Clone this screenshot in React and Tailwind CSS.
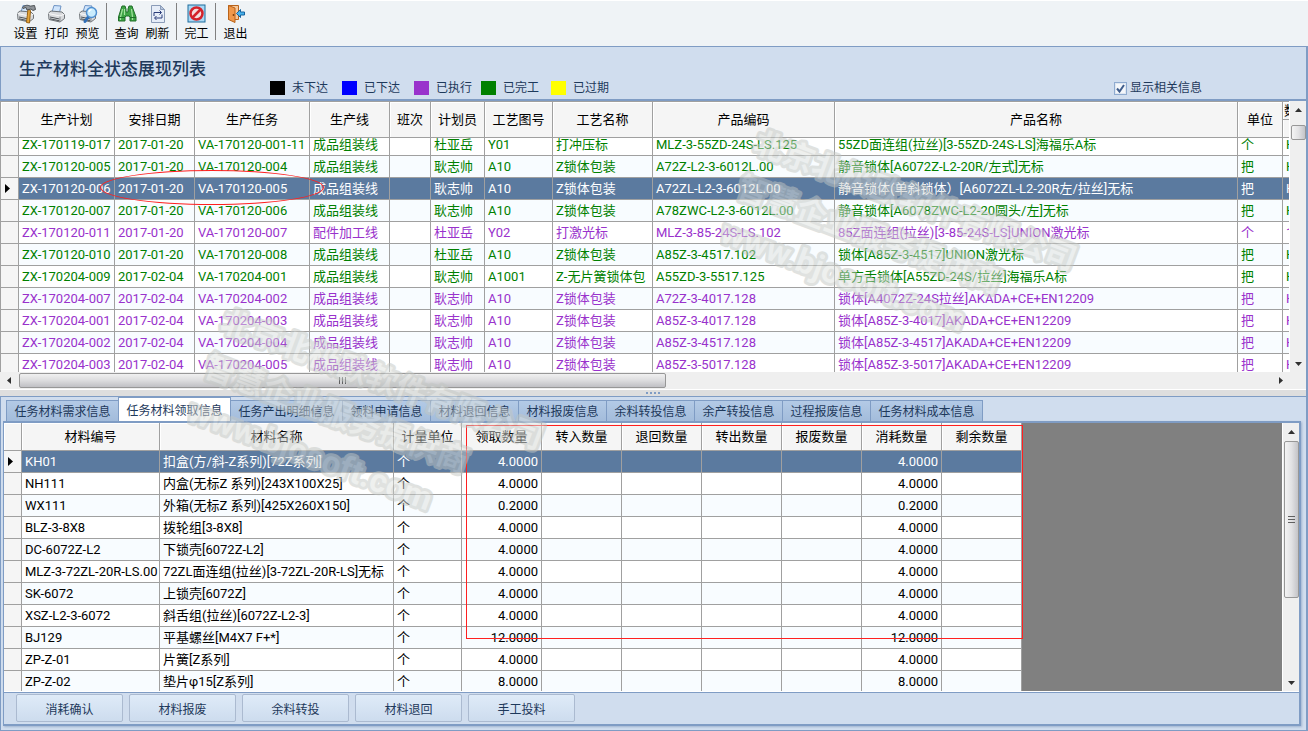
import React from "react";
import clsx from "clsx";

const legend = [
  { label: "未下达", color: "bg-black", width: "w-[72px]" },
  { label: "已下达", color: "bg-[#0000ff]", width: "w-[72px]" },
  { label: "已执行", color: "bg-[#9932cc]", width: "w-[67px]" },
  { label: "已完工", color: "bg-[#008000]", width: "w-[70px]" },
  { label: "已过期", color: "bg-[#ffff00]", width: "w-[70px]" },
];

const planColumns = [
  { title: "生产计划", width: "w-[96px]" },
  { title: "安排日期", width: "w-[80px]" },
  { title: "生产任务", width: "w-[115px]" },
  { title: "生产线", width: "w-[80px]" },
  { title: "班次", width: "w-[41px]" },
  { title: "计划员", width: "w-[54px]" },
  { title: "工艺图号", width: "w-[68px]" },
  { title: "工艺名称", width: "w-[100px]" },
  { title: "产品编码", width: "w-[182px]" },
  { title: "产品名称", width: "w-[403px]" },
  { title: "单位", width: "w-[45px]" },
];

const planRows = [
  ["done", "ZX-170119-017", "2017-01-20", "VA-170120-001-11", "成品组装线", "", "杜亚岳", "Y01", "打冲压标", "MLZ-3-55ZD-24S-LS.125", "55ZD面连组(拉丝)[3-55ZD-24S-LS]海福乐A标", "个", "H"],
  ["done", "ZX-170120-005", "2017-01-20", "VA-170120-004", "成品组装线", "", "耿志帅", "A10", "Z锁体包装", "A72Z-L2-3-6012L.00", "静音锁体[A6072Z-L2-20R/左式]无标", "把", "H"],
  ["done", "ZX-170120-006", "2017-01-20", "VA-170120-005", "成品组装线", "", "耿志帅", "A10", "Z锁体包装", "A72ZL-L2-3-6012L.00", "静音锁体(单斜锁体）[A6072ZL-L2-20R左/拉丝]无标", "把", "H"],
  ["done", "ZX-170120-007", "2017-01-20", "VA-170120-006", "成品组装线", "", "耿志帅", "A10", "Z锁体包装", "A78ZWC-L2-3-6012L.00", "静音锁体[A6078ZWC-L2-20圆头/左]无标", "把", "H"],
  ["running", "ZX-170120-011", "2017-01-20", "VA-170120-007", "配件加工线", "", "杜亚岳", "Y02", "打激光标", "MLZ-3-85-24S-LS.102", "85Z面连组(拉丝)[3-85-24S-LS]UNION激光标", "个", "1"],
  ["done", "ZX-170120-010", "2017-01-20", "VA-170120-008", "成品组装线", "", "杜亚岳", "A10", "Z锁体包装", "A85Z-3-4517.102", "锁体[A85Z-3-4517]UNION激光标", "把", "H"],
  ["done", "ZX-170204-009", "2017-02-04", "VA-170204-001", "成品组装线", "", "耿志帅", "A1001", "Z-无片簧锁体包", "A55ZD-3-5517.125", "单方舌锁体[A55ZD-24S/拉丝]海福乐A标", "把", "H"],
  ["running", "ZX-170204-007", "2017-02-04", "VA-170204-002", "成品组装线", "", "耿志帅", "A10", "Z锁体包装", "A72Z-3-4017.128", "锁体[A4072Z-24S拉丝]AKADA+CE+EN12209", "把", "H"],
  ["running", "ZX-170204-001", "2017-02-04", "VA-170204-003", "成品组装线", "", "耿志帅", "A10", "Z锁体包装", "A85Z-3-4017.128", "锁体[A85Z-3-4017]AKADA+CE+EN12209", "把", "H"],
  ["running", "ZX-170204-002", "2017-02-04", "VA-170204-004", "成品组装线", "", "耿志帅", "A10", "Z锁体包装", "A85Z-3-4517.128", "锁体[A85Z-3-4517]AKADA+CE+EN12209", "把", "H"],
  ["running", "ZX-170204-003", "2017-02-04", "VA-170204-005", "成品组装线", "", "耿志帅", "A10", "Z锁体包装", "A85Z-3-5017.128", "锁体[A85Z-3-5017]AKADA+CE+EN12209", "把", "H"],
];

const tabs = [
  "任务材料需求信息",
  "任务材料领取信息",
  "任务产出明细信息",
  "领料申请信息",
  "材料退回信息",
  "材料报废信息",
  "余料转投信息",
  "余产转投信息",
  "过程报废信息",
  "任务材料成本信息",
];

const quantityColumns = ["领取数量", "转入数量", "退回数量", "转出数量", "报废数量", "消耗数量", "剩余数量"];

const materialRows = [
  ["KH01", "扣盒(方/斜-Z系列)[72Z系列]", "4.0000"],
  ["NH111", "内盒(无标Z 系列)[243X100X25]", "4.0000"],
  ["WX111", "外箱(无标Z 系列)[425X260X150]", "0.2000"],
  ["BLZ-3-8X8", "拨轮组[3-8X8]", "4.0000"],
  ["DC-6072Z-L2", "下锁壳[6072Z-L2]", "4.0000"],
  ["MLZ-3-72ZL-20R-LS.00", "72ZL面连组(拉丝)[3-72ZL-20R-LS]无标", "4.0000"],
  ["SK-6072", "上锁壳[6072Z]", "4.0000"],
  ["XSZ-L2-3-6072", "斜舌组(拉丝)[6072Z-L2-3]", "4.0000"],
  ["BJ129", "平基螺丝[M4X7 F+*]", "12.0000"],
  ["ZP-Z-01", "片簧[Z系列]", "4.0000"],
  ["ZP-Z-02", "垫片φ15[Z系列]", "8.0000"],
];

const actions = ["消耗确认", "材料报废", "余料转投", "材料退回", "手工投料"];

const PrinterShape = () => (
  <>
    <path d="M5 8 7 1.5 14 2 12.5 8.5z" fill="#cfe4fb" stroke="#6d93c4" />
    <path d="M1.5 9 4 7l11 1 2.5 2.5v4L13 18l-11-2.5z" fill="#d9dbde" stroke="#6f7478" />
    <path d="M1.5 9.5 13 12l4.5-2" fill="none" stroke="#f8f8f8" />
    <path d="M3 13l9.5 2M3 14.8l9.5 2" stroke="#4f5458" />
    <path d="M13 12.5V18" stroke="#8c9094" />
  </>
);

const icons = {
  settings: (
    <>
      <PrinterShape />
      <path d="M12 5l2.5 1.5-1 12.5-3-.5z" fill="#e5a53a" stroke="#9a6316" />
      <path d="M6.5 3.5C9 .8 12 .8 14 2.2l4.5-.7 1 4-2.5 1-2-1.5-4 1-1-2.5-3 1z" fill="#8f9499" stroke="#4c5155" />
    </>
  ),
  print: <PrinterShape />,
  preview: (
    <>
      <PrinterShape />
      <path d="M10.5 12.5 7 17.5" stroke="#2f6fb8" strokeWidth="3" strokeLinecap="round" />
      <circle cx="13.5" cy="8.5" r="5" fill="#c9ecfd" stroke="#4f8fd0" strokeWidth="1.5" />
      <path d="M11 8c.3-1.500 1.300-2.300 2.600-2.300" fill="none" stroke="#fff" strokeWidth="1.200" />
    </>
  ),
  search: (
    <>
      <path d="M5 2h3l1 3v3h2V5l1-3h3l1 3 3 8v4h-6v-4l-1-1h-3l-1 1v4H1.500v-4L4 5z" fill="#3ea445" stroke="#1f6e29" />
      <path d="M5.500 5 3.500 13v3M14.500 5l1 8v3M7.500 5v6" fill="none" stroke="#a5e3a0" strokeWidth="1.200" />
      <path d="M2 13.500h6M13 13.500h6" stroke="#1f6e29" />
    </>
  ),
  refresh: (
    <>
      <path d="M3.500 1.500h9l4 4v13h-13z" fill="#e6edf8" stroke="#8b9cb8" />
      <path d="M12.500 1.500v4h4z" fill="#b8c7de" stroke="#8b9cb8" />
      <path d="M6 12V8.500h7M11.500 6.500l2 2-2 2M14 10.500V14H7M8.500 12l-2 2 2 2" fill="none" stroke="#2b3d7a" />
    </>
  ),
  finish: (
    <>
      <rect x="1" y="1" width="17" height="17" fill="#a9d8f5" stroke="#1d6c9c" />
      <circle cx="9.500" cy="9.500" r="6" fill="#f3dede" stroke="#d4232b" strokeWidth="2.500" />
      <path d="M5.500 13.500 13.500 5.500" stroke="#d4232b" strokeWidth="2.500" />
    </>
  ),
  exit: (
    <>
      <path d="M2.500 1.500h10v14h-10z" fill="#f6c79a" stroke="#b9631a" />
      <path d="M2.500 1.500 9 4v14.500l-6.500-3z" fill="#f0984a" stroke="#b9631a" />
      <circle cx="7.500" cy="11" r="0.900" fill="#7a3c0b" />
      <path d="M10.500 9.500 14.500 5.500V8h4v3h-4v2.500z" fill="#49b3ec" stroke="#16629e" />
    </>
  ),
};

const toolGroups = [
  [
    ["设置", "settings"],
    ["打印", "print"],
    ["预览", "preview"],
  ],
  [
    ["查询", "search"],
    ["刷新", "refresh"],
  ],
  [["完工", "finish"]],
  [["退出", "exit"]],
];

const Toolbar = () => (
  <div className="flex h-[46px] bg-[#eff3f6] border-t border-white pl-2.5 pt-0.5">
    {toolGroups.map((group, i) => (
      <div key={i} className="flex">
        {i > 0 && <div className="w-px h-[37px] bg-[#808080] ml-[3px] mr-1" />}
        {group.map(([label, icon]) => (
          <button key={label} className="w-[31px] flex flex-col items-center pt-px text-black">
            <svg width="20" height="20" viewBox="0 0 20 20">
              {icons[icon]}
            </svg>
            <span className="leading-4 mt-0.5">{label}</span>
          </button>
        ))}
      </div>
    ))}
  </div>
);

const arrowPaths = {
  up: "M1 6 4.500 2 8 6z",
  down: "M1 3h7L4.500 7z",
  left: "M6 1v7L2 4.500z",
  right: "M3 1v7l4-3.500z",
};

const Arrow = ({ dir }) => (
  <svg width="9" height="9" viewBox="0 0 9 9" className="shrink-0">
    <path d={arrowPaths[dir]} fill="#303030" />
  </svg>
);

const RowPointer = () => (
  <svg width="6" height="9" viewBox="0 0 6 9" className="ml-1">
    <path d="M0 0v9l5-4.500z" fill="#000" />
  </svg>
);

const VerticalScrollbar = ({ thumb, grip }) => (
  <div className="w-[17px] shrink-0 bg-[#efefef] border-l border-white flex flex-col items-center">
    <div className="h-[18px] flex items-center">
      <Arrow dir="up" />
    </div>
    <div
      className={clsx(
        "w-[15px] rounded-xs border border-[#979797] bg-linear-to-r from-[#f4f4f4] via-[#e2e2e4] to-[#c4c4c8] flex flex-col items-center justify-center gap-px",
        thumb
      )}
    >
      {grip && [0, 1, 2].map((n) => <div key={n} className="w-[7px] h-px bg-[#606060] mb-px" />)}
    </div>
    <div className="mt-auto h-[18px] flex items-center">
      <Arrow dir="down" />
    </div>
  </div>
);

const HeadCell = ({ className, children }) => (
  <th
    scope="col"
    className={clsx(
      "p-0 bg-[#f5f5f5] border-r border-b border-[#a0a0a0] shadow-[inset_1px_1px_0_#fff] font-normal text-center",
      className
    )}
  >
    {children}
  </th>
);

const RowHead = ({ selected }) => (
  <td className="p-0 bg-[#f5f5f5] border-r border-b border-[#a0a0a0]">{selected && <RowPointer />}</td>
);

const PlanTable = () => (
  <div className="relative flex bg-white">
    <div className="flex-1 min-w-0 h-[271px] overflow-hidden">
      <table className="table-fixed w-[1400px] border-separate border-spacing-0 text-[13px] text-black border-l border-t border-[#a0a0a0]">
        <thead>
          <tr className="h-[36px]">
            <HeadCell className="w-[18px]" />
            {planColumns.map((c) => (
              <HeadCell key={c.title} className={c.width}>
                {c.title}
              </HeadCell>
            ))}
            <HeadCell>
              <div className="h-[18px] leading-[17px] border-b border-[#a0a0a0] text-left pl-px">数量</div>
              <div className="h-[17px]" />
            </HeadCell>
          </tr>
        </thead>
        <tbody>
          {planRows.map(([state, ...cells], r) => {
            const selected = r === 2;
            return (
              <tr
                key={cells[0]}
                className={clsx(
                  selected ? "bg-[#5b7a9f] text-white" : state === "done" ? "text-[#008000]" : "text-[#9932cc]",
                  !selected && (r % 2 ? "bg-[#f8fcff]" : "bg-white")
                )}
              >
                <RowHead selected={selected} />
                {cells.map((text, c) => (
                  <td key={c} className="p-0 border-r border-b border-[#a0a0a0]">
                    <div
                      className={clsx(
                        "flex pl-[3px] overflow-hidden whitespace-nowrap leading-[21px]",
                        r === 0 ? "h-[17px] items-end" : "h-[21px]"
                      )}
                    >
                      {text}
                    </div>
                  </td>
                ))}
              </tr>
            );
          })}
        </tbody>
      </table>
    </div>
    <VerticalScrollbar thumb="h-[15px] mt-1.5" />
    <div className="absolute left-[100px] top-[69px] w-[224px] h-[35px] rounded-[50%] border border-[#ff2020] pointer-events-none" />
  </div>
);

const HorizontalScrollbar = () => (
  <div className="flex h-[18px] items-center bg-[#efefef] border-b border-white">
    <div className="w-[19px] flex justify-center">
      <Arrow dir="left" />
    </div>
    <div className="w-1/2 max-w-[647px] h-[15px] rounded-xs border border-[#979797] bg-linear-to-b from-[#f0f0f0] via-[#dcdcde] to-[#c0c0c4] flex items-center justify-center gap-px">
      {[0, 1, 2].map((n) => (
        <div key={n} className="w-px h-[7px] bg-[#606060] mr-px" />
      ))}
    </div>
    <div className="ml-auto mr-[21px]">
      <Arrow dir="right" />
    </div>
  </div>
);

const MaterialTable = () => (
  <div className="relative flex h-[269px] bg-[#808080] border-b border-white">
    <div className="flex-1 min-w-0 overflow-hidden">
      <table className="table-fixed w-[1018px] border-separate border-spacing-0 text-[13px] text-black">
        <thead>
          <tr className="h-[28px]">
            <HeadCell className="w-[18px]" />
            <HeadCell className="w-[138px]">材料编号</HeadCell>
            <HeadCell className="w-[234px]">材料名称</HeadCell>
            <HeadCell className="w-[68px]">计量单位</HeadCell>
            {quantityColumns.map((title) => (
              <HeadCell key={title} className="w-[80px]">
                {title}
              </HeadCell>
            ))}
          </tr>
        </thead>
        <tbody>
          {materialRows.map(([code, name, amount], r) => {
            const cells = [code, name, "个", amount, "", "", "", "", amount, ""];
            return (
              <tr
                key={code}
                className={clsx("h-[22px]", r === 0 ? "bg-[#5b7a9f] text-white" : r % 2 ? "bg-white" : "bg-[#f8fcff]")}
              >
                <RowHead selected={r === 0} />
                {cells.map((text, c) => (
                  <td
                    key={c}
                    className={clsx(
                      "p-0 px-[3px] border-r border-b border-[#a0a0a0] whitespace-nowrap leading-[21px]",
                      c > 2 && "text-right"
                    )}
                  >
                    {text}
                  </td>
                ))}
              </tr>
            );
          })}
        </tbody>
      </table>
    </div>
    <VerticalScrollbar thumb="h-[157px]" grip />
    <div className="absolute left-[462px] top-0.5 w-[557px] h-[214px] border border-[#ff2020] pointer-events-none" />
  </div>
);

const Tabs = () => (
  <div role="tablist" className="flex items-end h-[24px] pl-[3px]">
    {tabs.map((tab, i) => {
      const active = i === 1;
      return (
        <button
          key={tab}
          role="tab"
          aria-selected={active}
          className={clsx(
            "border border-b-0 border-[#7f9cc4] text-[#1e395b]",
            tab.length > 6 ? "w-[113px]" : "w-[89px]",
            i > 0 && "-ml-px",
            active ? "h-[24px] bg-white pt-0.5" : "h-[21px] bg-linear-to-b from-[#b3cae6] to-[#a3bcdb] pt-0.5"
          )}
        >
          {tab}
        </button>
      );
    })}
  </div>
);

const Watermark = ({ className }) => (
  <svg width="420" height="280" viewBox="0 0 420 280" className={clsx("absolute pointer-events-none", className)} opacity="0.500">
    <g
      transform="translate(36 28) rotate(20.500)"
      fontSize="31"
      fontWeight="700"
      fill="#dfe2df"
      stroke="#c3c7c3"
      strokeWidth="6"
      strokeLinejoin="round"
      paintOrder="stroke"
    >
      <text x="0" y="12">北京北极欧软件有限公司</text>
      <text x="0" y="60">智慧企业服务提供商</text>
      <text x="0" y="108" fontSize="33">www.bjosoft.com</text>
    </g>
  </svg>
);

const App = () => (
  <div className="relative min-h-screen overflow-hidden bg-[#cfddee] text-xs text-[#1e395b] font-[Roboto,'Noto_Sans_CJK_SC',sans-serif]">
    <Toolbar />

    <div className="border-y border-r-2 border-[#7f9cc4]">
      <div className="h-[54px] border-l border-b-2 border-[#7f9cc4] bg-[#d0ddee] flex items-end pl-[18px] pr-[104px]">
        <h1 className="self-start mt-2.5 w-[251px] text-[17px] leading-6 font-medium">生产材料全状态展现列表</h1>
        <div className="flex mb-[3px]">
          {legend.map((item) => (
            <div key={item.label} className={clsx("flex items-center gap-[7px] leading-4", item.width)}>
              <span className={clsx("w-[15px] h-[14px]", item.color)} />
              {item.label}
            </div>
          ))}
        </div>
        <label className="ml-auto mb-[3px] flex items-center gap-[3px] leading-4">
          <span className="relative flex">
            <input
              type="checkbox"
              defaultChecked
              className="peer appearance-none w-[13px] h-[13px] bg-[#f4f7fb] border border-[#8fabd0] shadow-[inset_0_0_0_1px_#dfe7f1]"
            />
            <svg width="13" height="13" viewBox="0 0 13 13" className="absolute pointer-events-none hidden peer-checked:block">
              <path d="M3 6.500 5.500 9.500 10 3" fill="none" stroke="#3f5d8c" strokeWidth="2" />
            </svg>
          </span>
          显示相关信息
        </label>
      </div>
      <PlanTable />
      <HorizontalScrollbar />
      <div className="h-1.5 bg-[#dedede] flex items-center justify-center gap-0.5">
        {[0, 1, 2, 3].map((n) => (
          <span key={n} className="w-0.5 h-0.5 bg-[#7f9cc4]" />
        ))}
      </div>
      <div className="border-t border-l border-[#7f9cc4] bg-[#d0ddee] pl-0.5 pr-[5px] pb-1">
        <Tabs />
        <div className="border border-t-2 border-r-2 border-b-2 border-[#7f9cc4] shadow-[1px_1px_2px_#9fb3cf]">
          <MaterialTable />
          <div className="border-t border-[#7f9cc4] h-[32px] pt-px pl-3 flex gap-1.5">
            {actions.map((label) => (
              <button
                key={label}
                className="w-[107px] h-[28px] pt-1 rounded-xs border border-[#abbad0] bg-linear-to-b from-[#dfebf8] to-[#cddcee] text-[#1e395b]"
              >
                {label}
              </button>
            ))}
          </div>
        </div>
      </div>
    </div>

    <Watermark className="left-[720px] top-[112px]" />
    <Watermark className="left-[187px] top-[291px]" />
  </div>
);

export default App;
